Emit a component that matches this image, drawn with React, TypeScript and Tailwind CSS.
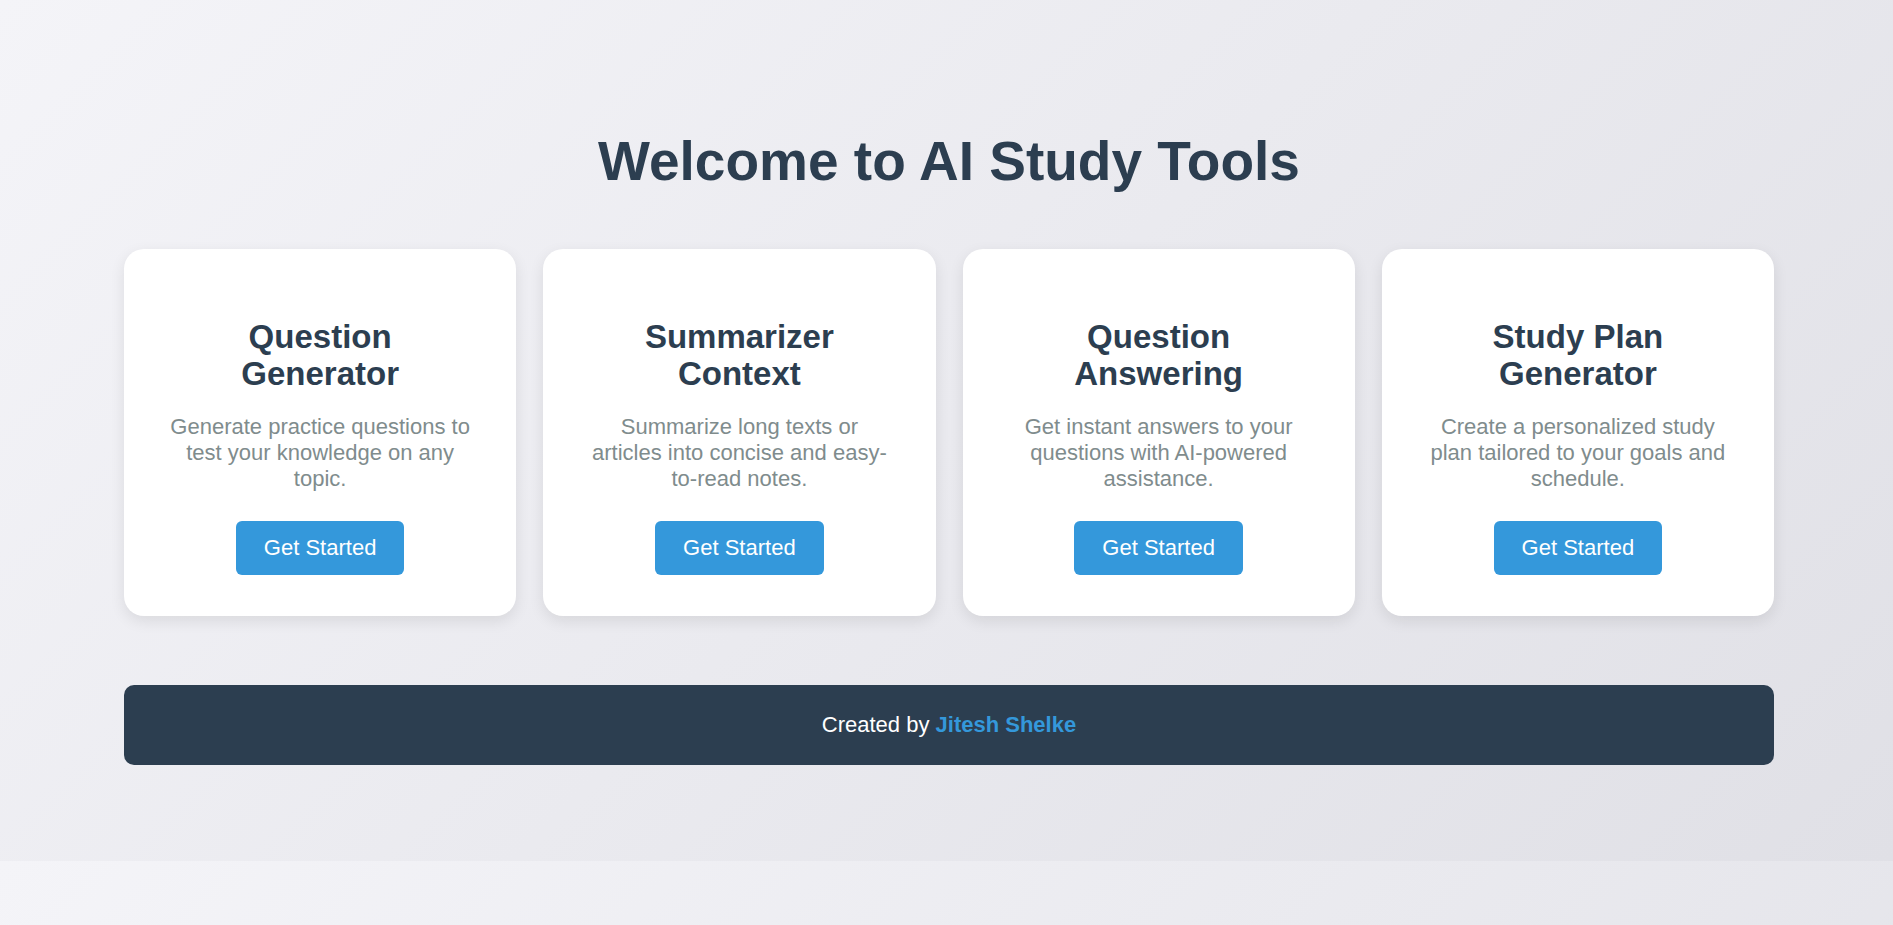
import React from "react";

const cards = [
  {
    title: "Question Generator",
    desc: "Generate practice questions to test your knowledge on any topic.",
  },
  {
    title: "Summarizer Context",
    desc: "Summarize long texts or articles into concise and easy-to-read notes.",
  },
  {
    title: "Question Answering",
    desc: "Get instant answers to your questions with AI-powered assistance.",
  },
  {
    title: "Study Plan Generator",
    desc: "Create a personalized study plan tailored to your goals and schedule.",
  },
];

export default function App() {
  return (
    <div
      className="min-h-screen w-full bg-[linear-gradient(135deg,#f4f4f8_0%,#e0e0e6_100%)] bg-[length:100%_861px] bg-repeat"
      style={{ fontFamily: '"Liberation Sans", Arial, Helvetica, sans-serif' }}
    >
      <div className="ml-[124px] w-[1650px] pt-[128px] pb-[96px]">
        <h1 className="m-0 mb-[55px] text-center text-[55px] font-bold leading-[66px] text-[#2c3e50]">
          Welcome to AI Study Tools
        </h1>

        <div className="grid grid-cols-4 gap-[27px]">
          {cards.map((c) => (
            <div
              key={c.title}
              className="flex flex-col items-center rounded-[20px] bg-white px-[43px] pt-[69px] pb-[41px] text-center shadow-[0_5px_15px_rgba(0,0,0,0.09)]"
            >
              <h3 className="m-0 text-[33px] font-bold leading-[37px] text-[#2c3e50]">
                {c.title}
              </h3>
              <p className="m-0 mt-[22px] text-[22px] leading-[26px] text-[#7f8c8d]">
                {c.desc}
              </p>
              <button className="mt-[29px] h-[54px] rounded-[6px] bg-[#3498db] px-[28px] text-[22px] leading-[26px] text-white">
                Get Started
              </button>
            </div>
          ))}
        </div>

        <footer className="mt-[69px] flex h-[80px] items-center justify-center rounded-[10px] bg-[#2c3e50] text-[22px] leading-[26px] text-white">
          <span>
            Created by <span className="font-bold text-[#3498db]">Jitesh Shelke</span>
          </span>
        </footer>
      </div>
    </div>
  );
}
